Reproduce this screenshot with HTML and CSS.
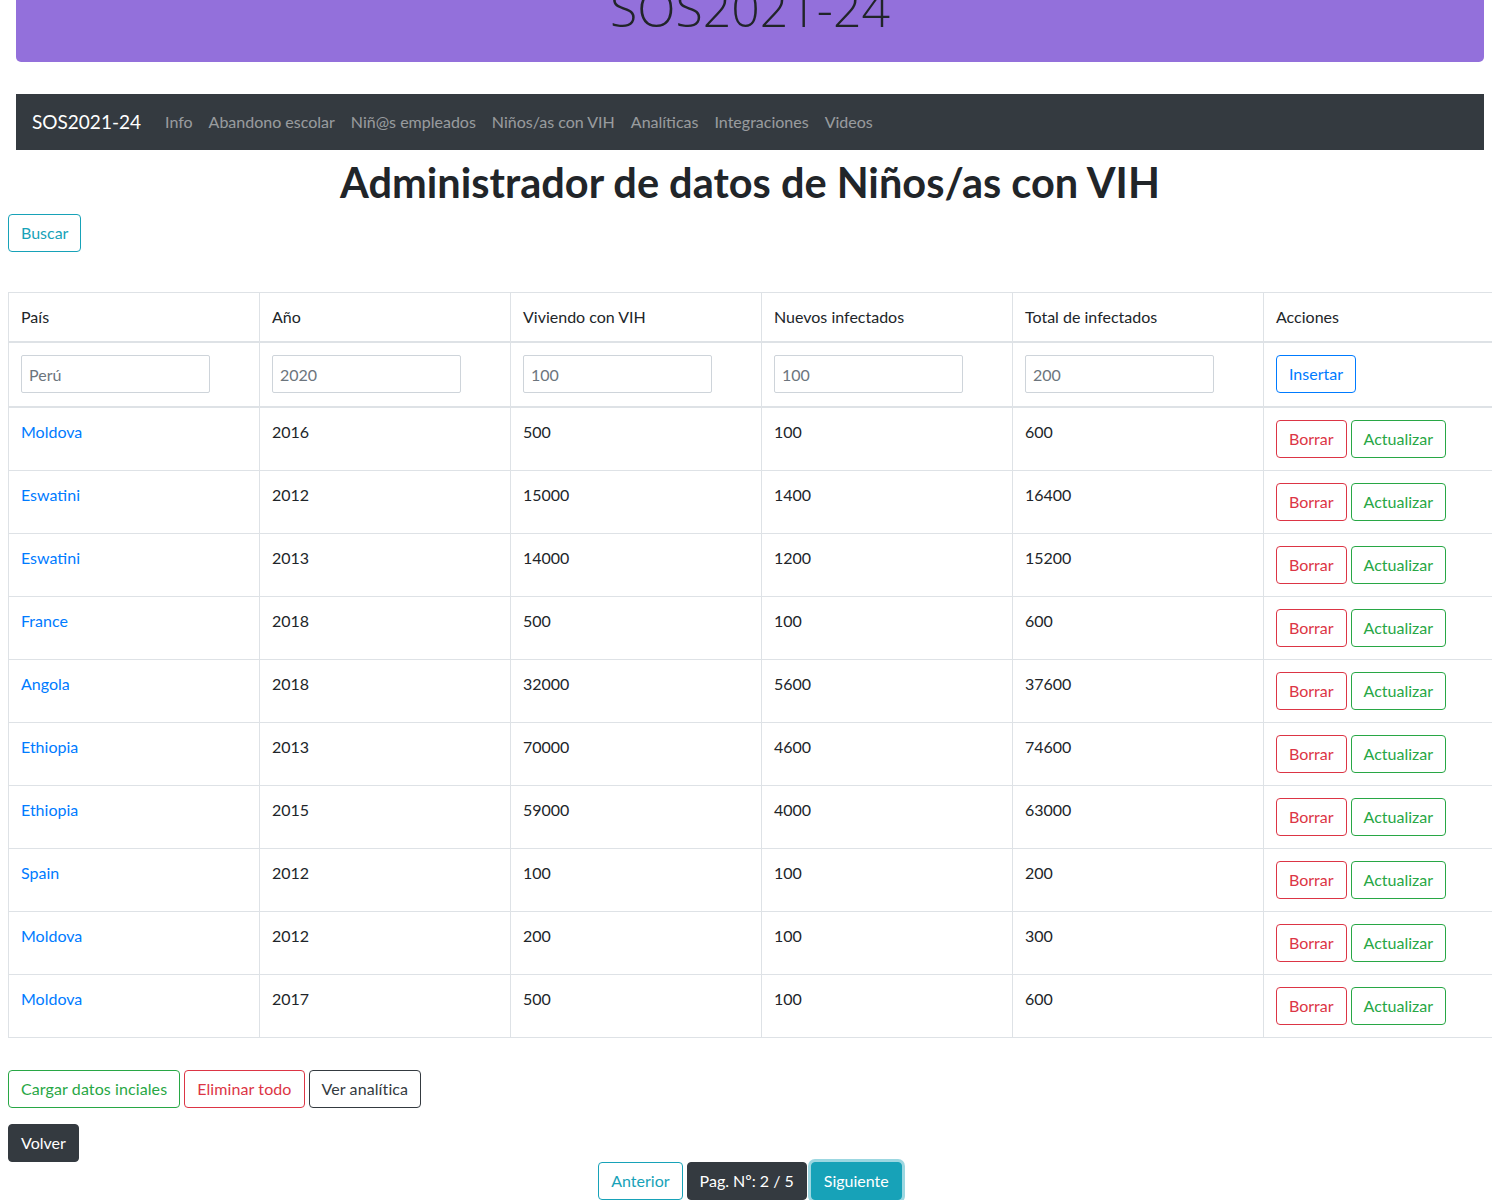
FILE: index.html
```html
<!DOCTYPE html>
<html lang="es">
<head>
<meta charset="utf-8">
<title>SOS2021-24</title>
<link rel="stylesheet" href="styles.css">
</head>
<body>
<div class="jumbotron">
  <h1 class="display">SOS2021-24</h1>
</div>
<nav class="navbar">
  <span class="brand">SOS2021-24</span>
  <a class="nav-link" href="#">Info</a>
  <a class="nav-link" href="#">Abandono escolar</a>
  <a class="nav-link" href="#">Niñ@s empleados</a>
  <a class="nav-link" href="#">Niños/as con VIH</a>
  <a class="nav-link" href="#">Analíticas</a>
  <a class="nav-link" href="#">Integraciones</a>
  <a class="nav-link" href="#">Videos</a>
</nav>
<h1 class="title">Administrador de datos de Niños/as con VIH</h1>
<div class="search-row"><button class="btn btn-outline-info">Buscar</button></div>
<table class="table">
  <colgroup>
    <col class="c1"><col class="c1"><col class="c1"><col class="c1"><col class="c1"><col class="c6">
  </colgroup>
  <thead>
    <tr><th>País</th><th>Año</th><th>Viviendo con VIH</th><th>Nuevos infectados</th><th>Total de infectados</th><th>Acciones</th></tr>
  </thead>
  <tbody>
    <tr class="input-row">
      <td><input class="form-control" placeholder="Perú"></td>
      <td><input class="form-control" placeholder="2020"></td>
      <td><input class="form-control" placeholder="100"></td>
      <td><input class="form-control" placeholder="100"></td>
      <td><input class="form-control" placeholder="200"></td>
      <td><button class="btn btn-outline-primary">Insertar</button></td>
    </tr>
    <tr><td><a href="#">Moldova</a></td><td>2016</td><td>500</td><td>100</td><td>600</td><td class="actions"><button class="btn btn-outline-danger">Borrar</button><button class="btn btn-outline-success">Actualizar</button></td></tr>
    <tr><td><a href="#">Eswatini</a></td><td>2012</td><td>15000</td><td>1400</td><td>16400</td><td class="actions"><button class="btn btn-outline-danger">Borrar</button><button class="btn btn-outline-success">Actualizar</button></td></tr>
    <tr><td><a href="#">Eswatini</a></td><td>2013</td><td>14000</td><td>1200</td><td>15200</td><td class="actions"><button class="btn btn-outline-danger">Borrar</button><button class="btn btn-outline-success">Actualizar</button></td></tr>
    <tr><td><a href="#">France</a></td><td>2018</td><td>500</td><td>100</td><td>600</td><td class="actions"><button class="btn btn-outline-danger">Borrar</button><button class="btn btn-outline-success">Actualizar</button></td></tr>
    <tr><td><a href="#">Angola</a></td><td>2018</td><td>32000</td><td>5600</td><td>37600</td><td class="actions"><button class="btn btn-outline-danger">Borrar</button><button class="btn btn-outline-success">Actualizar</button></td></tr>
    <tr><td><a href="#">Ethiopia</a></td><td>2013</td><td>70000</td><td>4600</td><td>74600</td><td class="actions"><button class="btn btn-outline-danger">Borrar</button><button class="btn btn-outline-success">Actualizar</button></td></tr>
    <tr><td><a href="#">Ethiopia</a></td><td>2015</td><td>59000</td><td>4000</td><td>63000</td><td class="actions"><button class="btn btn-outline-danger">Borrar</button><button class="btn btn-outline-success">Actualizar</button></td></tr>
    <tr><td><a href="#">Spain</a></td><td>2012</td><td>100</td><td>100</td><td>200</td><td class="actions"><button class="btn btn-outline-danger">Borrar</button><button class="btn btn-outline-success">Actualizar</button></td></tr>
    <tr><td><a href="#">Moldova</a></td><td>2012</td><td>200</td><td>100</td><td>300</td><td class="actions"><button class="btn btn-outline-danger">Borrar</button><button class="btn btn-outline-success">Actualizar</button></td></tr>
    <tr><td><a href="#">Moldova</a></td><td>2017</td><td>500</td><td>100</td><td>600</td><td class="actions"><button class="btn btn-outline-danger">Borrar</button><button class="btn btn-outline-success">Actualizar</button></td></tr>
  </tbody>
</table>
<div class="bulk-row">
  <button class="btn btn-outline-success">Cargar datos inciales</button>
  <button class="btn btn-outline-danger">Eliminar todo</button>
  <button class="btn btn-outline-dark">Ver analítica</button>
</div>
<div class="back-row"><button class="btn btn-dark">Volver</button></div>
<div class="pager">
  <button class="btn btn-outline-info">Anterior</button>
  <button class="btn btn-dark">Pag. Nº: 2 / 5</button>
  <button class="btn btn-info btn-focus">Siguiente</button>
</div>
</body>
</html>
```
FILE: styles.css
```css
* { box-sizing: border-box; }
html { overflow: hidden; }
body {
  margin: 0 8px 8px;
  font-family: Lato, "Open Sans", sans-serif;
  font-size: 16px;
  line-height: 1.5;
  color: #212529;
  background: #fff;
}
.jumbotron {
  background: #9370db;
  margin: 0 8px 32px;
  height: 62px;
  padding: 0 32px;
  overflow: hidden;
  border-radius: 0 0 5px 5px;
  text-align: center;
}
.display {
  margin: -22px 0 0;
  font-family: "Open Sans", sans-serif;
  font-size: 50px;
  font-weight: 300;
  line-height: 60px;
  color: #212529;
}
.navbar {
  margin: 0 8px;
  background: #343a40;
  height: 56px;
  padding: 8px 16px;
  display: flex;
  align-items: center;
}
.brand {
  color: #fff;
  font-size: 19px;
  line-height: 30px;
  margin-right: 16px;
}
.nav-link {
  color: rgba(255, 255, 255, 0.5);
  text-decoration: none;
  padding: 8px;
}
.title {
  margin: 8px 0 8px;
  text-align: center;
  font-size: 41.5px;
  font-weight: 700;
  line-height: 48px;
}
.search-row { margin-bottom: 40px; display: flex; }
.btn {
  display: inline-block;
  font-family: inherit;
  font-size: 16px;
  line-height: 1.5;
  padding: 6px 12px;
  border: 1px solid transparent;
  border-radius: 4px;
  background: transparent;
  cursor: pointer;
}
.btn-outline-info { color: #17a2b8; border-color: #17a2b8; }
.btn-outline-primary { color: #007bff; border-color: #007bff; }
.btn-outline-danger { color: #dc3545; border-color: #dc3545; }
.btn-outline-success { color: #28a745; border-color: #28a745; }
.btn-outline-dark { color: #343a40; border-color: #343a40; }
.btn-dark { color: #fff; background: #343a40; border-color: #343a40; }
.btn-info { color: #fff; background: #17a2b8; border-color: #17a2b8; }
.btn-focus { box-shadow: 0 0 0 3px rgba(58, 176, 195, 0.5); }
.bulk-row .btn { letter-spacing: 0.1px; }
.table {
  width: 100%;
  border-collapse: collapse;
  table-layout: fixed;
  margin-bottom: 32px;
}
.c1 { width: 251px; }
.c6 { width: 229px; }
.table th, .table td {
  border: 1px solid #dee2e6;
  padding: 12px;
  text-align: left;
  vertical-align: top;
  font-weight: 400;
}
.table thead th { border-bottom: 2px solid #dee2e6; }
.table .input-row td { border-bottom: 2px solid #dee2e6; padding-bottom: 13px; }
.table a { color: #007bff; text-decoration: none; }
.form-control {
  display: block;
  width: 189px;
  height: 38px;
  padding: 6px 7px;
  font-family: inherit;
  font-size: 16px;
  line-height: 1.5;
  color: #495057;
  border: 1px solid #ced4da;
  border-radius: 2px;
  background: #fff;
}
.form-control::placeholder { color: #6c757d; }
.actions .btn + .btn { margin-left: 4px; }
.bulk-row { display: flex; gap: 4px; margin-bottom: 16px; }
.back-row { display: flex; }
.pager { display: flex; justify-content: center; gap: 4px; }
```
